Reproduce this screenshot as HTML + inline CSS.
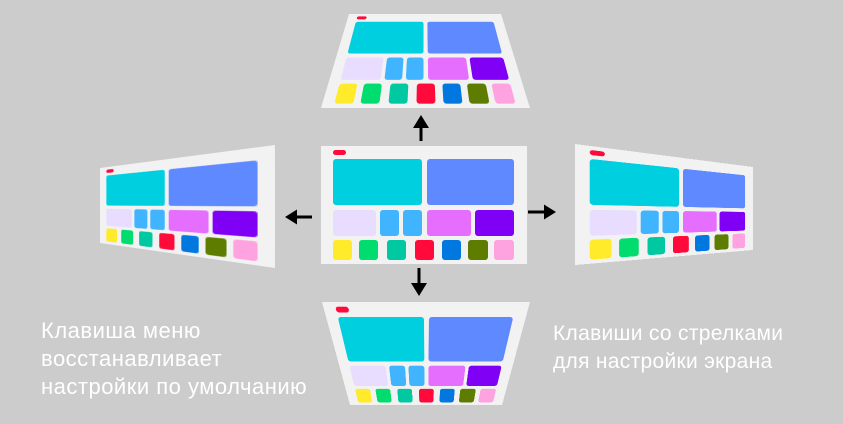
<!DOCTYPE html>
<html><head><meta charset="utf-8"><style>
*{margin:0;padding:0;box-sizing:border-box}
body{width:843px;height:424px;background:#cccccc;position:relative;overflow:hidden;font-family:"Liberation Sans","DejaVu Sans",sans-serif}
.p{position:absolute;left:0;top:0;width:206px;height:118px;background:#f2f2f2;transform-origin:0 0}
.p div{position:absolute;border-radius:3px}
.txt{position:absolute;color:#fff;line-height:28px;white-space:nowrap}
</style></head><body>
<div class="p" style="transform:matrix3d(0.7379,0,0,0,-0.9792,0.5470,0,-0.002311,0,0,1,0,349,14,0,1)">
<div style="left:12px;top:4px;width:13px;height:5px;background:#ff0a3a"></div>
<div style="left:12px;top:13px;width:89px;height:46px;background:#00cfe0"></div>
<div style="left:106px;top:13px;width:87px;height:46px;background:#5f8aff"></div>
<div style="left:12px;top:64px;width:43px;height:26px;background:#e8ddff"></div>
<div style="left:59px;top:64px;width:19px;height:26px;background:#40b4ff"></div>
<div style="left:82px;top:64px;width:19px;height:26px;background:#40b4ff"></div>
<div style="left:106px;top:64px;width:44px;height:26px;background:#e66eff"></div>
<div style="left:154px;top:64px;width:39px;height:26px;background:#7f00f5"></div>
<div style="left:12px;top:94px;width:19px;height:20px;background:#ffeb2a"></div>
<div style="left:38px;top:94px;width:19px;height:20px;background:#00dc6e"></div>
<div style="left:66px;top:94px;width:19px;height:20px;background:#00c8a0"></div>
<div style="left:94px;top:94px;width:19px;height:20px;background:#ff0a3a"></div>
<div style="left:121px;top:94px;width:19px;height:20px;background:#0078e0"></div>
<div style="left:147px;top:94px;width:20px;height:20px;background:#5e7d00"></div>
<div style="left:173px;top:94px;width:20px;height:20px;background:#ffa3e0"></div>
</div>
<div class="p" style="transform:matrix3d(1.0097,0,0,0,1.3301,2.1373,0,0.003122,0,0,1,0,322,302,0,1)">
<div style="left:12px;top:4px;width:13px;height:5px;background:#ff0a3a"></div>
<div style="left:12px;top:13px;width:89px;height:46px;background:#00cfe0"></div>
<div style="left:106px;top:13px;width:87px;height:46px;background:#5f8aff"></div>
<div style="left:12px;top:64px;width:43px;height:26px;background:#e8ddff"></div>
<div style="left:59px;top:64px;width:19px;height:26px;background:#40b4ff"></div>
<div style="left:82px;top:64px;width:19px;height:26px;background:#40b4ff"></div>
<div style="left:106px;top:64px;width:44px;height:26px;background:#e66eff"></div>
<div style="left:154px;top:64px;width:39px;height:26px;background:#7f00f5"></div>
<div style="left:12px;top:94px;width:19px;height:20px;background:#ffeb2a"></div>
<div style="left:38px;top:94px;width:19px;height:20px;background:#00dc6e"></div>
<div style="left:66px;top:94px;width:19px;height:20px;background:#00c8a0"></div>
<div style="left:94px;top:94px;width:19px;height:20px;background:#ff0a3a"></div>
<div style="left:121px;top:94px;width:19px;height:20px;background:#0078e0"></div>
<div style="left:147px;top:94px;width:20px;height:20px;background:#5e7d00"></div>
<div style="left:173px;top:94px;width:20px;height:20px;background:#ffa3e0"></div>
</div>
<div class="p" style="transform:matrix3d(0.3286,-0.3864,0,-0.001894,0,0.6356,0,0,0,0,1,0,100,168,0,1)">
<div style="left:12px;top:4px;width:13px;height:5px;background:#ff0a3a"></div>
<div style="left:12px;top:13px;width:89px;height:46px;background:#00cfe0"></div>
<div style="left:106px;top:13px;width:87px;height:46px;background:#5f8aff"></div>
<div style="left:12px;top:64px;width:43px;height:26px;background:#e8ddff"></div>
<div style="left:59px;top:64px;width:19px;height:26px;background:#40b4ff"></div>
<div style="left:82px;top:64px;width:19px;height:26px;background:#40b4ff"></div>
<div style="left:106px;top:64px;width:44px;height:26px;background:#e66eff"></div>
<div style="left:154px;top:64px;width:39px;height:26px;background:#7f00f5"></div>
<div style="left:12px;top:94px;width:19px;height:20px;background:#ffeb2a"></div>
<div style="left:38px;top:94px;width:19px;height:20px;background:#00dc6e"></div>
<div style="left:66px;top:94px;width:19px;height:20px;background:#00c8a0"></div>
<div style="left:94px;top:94px;width:19px;height:20px;background:#ff0a3a"></div>
<div style="left:121px;top:94px;width:19px;height:20px;background:#0078e0"></div>
<div style="left:147px;top:94px;width:20px;height:20px;background:#5e7d00"></div>
<div style="left:173px;top:94px;width:20px;height:20px;background:#ffa3e0"></div>
</div>
<div class="p" style="transform:matrix3d(2.5374,0.4828,0,0.002222,0,1.0254,0,0,0,0,1,0,575,144,0,1)">
<div style="left:12px;top:4px;width:13px;height:5px;background:#ff0a3a"></div>
<div style="left:12px;top:13px;width:89px;height:46px;background:#00cfe0"></div>
<div style="left:106px;top:13px;width:87px;height:46px;background:#5f8aff"></div>
<div style="left:12px;top:64px;width:43px;height:26px;background:#e8ddff"></div>
<div style="left:59px;top:64px;width:19px;height:26px;background:#40b4ff"></div>
<div style="left:82px;top:64px;width:19px;height:26px;background:#40b4ff"></div>
<div style="left:106px;top:64px;width:44px;height:26px;background:#e66eff"></div>
<div style="left:154px;top:64px;width:39px;height:26px;background:#7f00f5"></div>
<div style="left:12px;top:94px;width:19px;height:20px;background:#ffeb2a"></div>
<div style="left:38px;top:94px;width:19px;height:20px;background:#00dc6e"></div>
<div style="left:66px;top:94px;width:19px;height:20px;background:#00c8a0"></div>
<div style="left:94px;top:94px;width:19px;height:20px;background:#ff0a3a"></div>
<div style="left:121px;top:94px;width:19px;height:20px;background:#0078e0"></div>
<div style="left:147px;top:94px;width:20px;height:20px;background:#5e7d00"></div>
<div style="left:173px;top:94px;width:20px;height:20px;background:#ffa3e0"></div>
</div>
<div class="p" style="left:321px;top:146px">
<div style="left:12px;top:4px;width:13px;height:5px;background:#ff0a3a"></div>
<div style="left:12px;top:13px;width:89px;height:46px;background:#00cfe0"></div>
<div style="left:106px;top:13px;width:87px;height:46px;background:#5f8aff"></div>
<div style="left:12px;top:64px;width:43px;height:26px;background:#e8ddff"></div>
<div style="left:59px;top:64px;width:19px;height:26px;background:#40b4ff"></div>
<div style="left:82px;top:64px;width:19px;height:26px;background:#40b4ff"></div>
<div style="left:106px;top:64px;width:44px;height:26px;background:#e66eff"></div>
<div style="left:154px;top:64px;width:39px;height:26px;background:#7f00f5"></div>
<div style="left:12px;top:94px;width:19px;height:20px;background:#ffeb2a"></div>
<div style="left:38px;top:94px;width:19px;height:20px;background:#00dc6e"></div>
<div style="left:66px;top:94px;width:19px;height:20px;background:#00c8a0"></div>
<div style="left:94px;top:94px;width:19px;height:20px;background:#ff0a3a"></div>
<div style="left:121px;top:94px;width:19px;height:20px;background:#0078e0"></div>
<div style="left:147px;top:94px;width:20px;height:20px;background:#5e7d00"></div>
<div style="left:173px;top:94px;width:20px;height:20px;background:#ffa3e0"></div>
</div>
<svg style="position:absolute;left:0;top:0" width="843" height="424">
<g fill="#000">
<polygon points="421,115 413,128 429,128"/><rect x="419.5" y="127" width="3" height="14"/>
<polygon points="419,296 411,283 427,283"/><rect x="417.5" y="268" width="3" height="16"/>
<polygon points="285,217 297,209.5 297,224.5"/><rect x="296" y="215.5" width="16" height="3"/>
<polygon points="556,212 544,204.5 544,219.5"/><rect x="528" y="210.5" width="17" height="3"/>
</g></svg>
<div class="txt" style="left:41px;top:317px;font-size:22px;letter-spacing:0.5px">Клавиша меню<br>восстанавливает<br>настройки по умолчанию</div>
<div class="txt" style="left:553px;top:320px;font-size:21px;letter-spacing:0.3px">Клавиши со стрелками<br>для настройки экрана</div>
</body></html>
